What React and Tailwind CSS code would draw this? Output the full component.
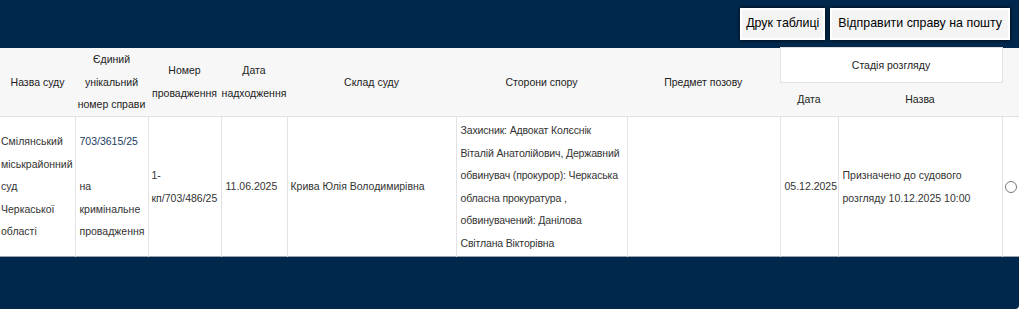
import React from 'react'

/**
 * Court case table — one row with hearing stage
 */
const font = { fontFamily: "'Liberation Sans', Arial, sans-serif" }

const widths = [75, 73, 73, 66, 169, 171, 153, 58, 164, 17]

export default function App() {
  return (
    <div className="w-[1024px] h-[314px] bg-white" style={font}>
      <div className="w-[1019px] h-[309px] bg-[#00284d] rounded-br-[4px] flex flex-col">
        {/* Toolbar */}
        <div className="h-[47px] flex items-center justify-end gap-[5px] pr-[9px]">
          <button className="h-[32px] px-[4px] whitespace-nowrap bg-[#f4f4f4] text-[12.4px] text-black border-2 border-white shadow-[0_0_4px_rgba(0,0,0,0.9)]">
            Друк таблиці
          </button>
          <button className="h-[32px] px-[6px] whitespace-nowrap bg-[#f4f4f4] text-[12.4px] text-black border-2 border-white shadow-[0_0_4px_rgba(0,0,0,0.9)]">
            Відправити справу на пошту
          </button>
        </div>

        {/* Table */}
        <table className="table-fixed border-collapse w-[1019px] leading-[22.5px]">
          <colgroup>
            {widths.map((w, i) => (
              <col key={i} style={{ width: w }} />
            ))}
          </colgroup>
          <thead className="bg-[#f7f7f7] text-[#222] text-[10.5px]">
            <tr className="h-[35px]">
              <th rowSpan={2} className="font-normal text-center align-middle">Назва суду</th>
              <th rowSpan={2} className="font-normal text-center align-middle">Єдиний унікальний номер справи</th>
              <th rowSpan={2} className="font-normal text-center align-middle">Номер провадження</th>
              <th rowSpan={2} className="font-normal text-center align-middle">Дата надходження</th>
              <th rowSpan={2} className="font-normal text-center align-middle">Склад суду</th>
              <th rowSpan={2} className="font-normal text-center align-middle">Сторони спору</th>
              <th rowSpan={2} className="font-normal text-center align-middle">Предмет позову</th>
              <th colSpan={2} className="font-normal text-center align-middle bg-white border border-[#e2e2e2]">Стадія розгляду</th>
              <th rowSpan={2} />
            </tr>
            <tr className="h-[34px] border-b border-[#e2e2e2]">
              <th className="font-normal text-center align-middle">Дата</th>
              <th className="font-normal text-center align-middle">Назва</th>
            </tr>
          </thead>
          <tbody className="bg-white text-[#333] text-[10.5px]">
            <tr className="h-[140px] border-b border-[#9aa3ad]">
              <td className="border-r border-[#e2e2e2] align-middle pl-[1px] pr-[2px]">
                Смілянський міськрайонний суд Черкаської області
              </td>
              <td className="border-r border-[#e2e2e2] align-middle px-[4px]">
                <span className="text-[#223c62]">703/3615/25</span>
                <br />
                <br />
                на кримінальне провадження
              </td>
              <td className="border-r border-[#e2e2e2] align-middle px-[3px] break-words">
                1-
                <br />
                кп/703/486/25
              </td>
              <td className="border-r border-[#e2e2e2] align-middle px-[4px]">11.06.2025</td>
              <td className="border-r border-[#e2e2e2] align-middle px-[3px]">Крива Юлія Володимирівна</td>
              <td className="border-r border-[#e2e2e2] align-middle pl-[4px] pr-[1px] py-[2px] tracking-[-0.15px]">
                Захисник: Адвокат Колєснік Віталій Анатолійович, Державний обвинувач (прокурор): Черкаська обласна прокуратура , обвинувачений: Данілова Світлана Вікторівна
              </td>
              <td className="border-r border-[#e2e2e2] align-middle" />
              <td className="border-r border-[#e2e2e2] align-middle px-[4px]">05.12.2025</td>
              <td className="border-r border-[#e2e2e2] align-middle px-[4px]">
                Призначено до судового розгляду 10.12.2025 10:00
              </td>
              <td className="align-middle">
                <span className="block w-[12px] h-[12px] rounded-full border border-[#767676] bg-white ml-[2px]" />
              </td>
            </tr>
          </tbody>
        </table>
      </div>
    </div>
  )
}
